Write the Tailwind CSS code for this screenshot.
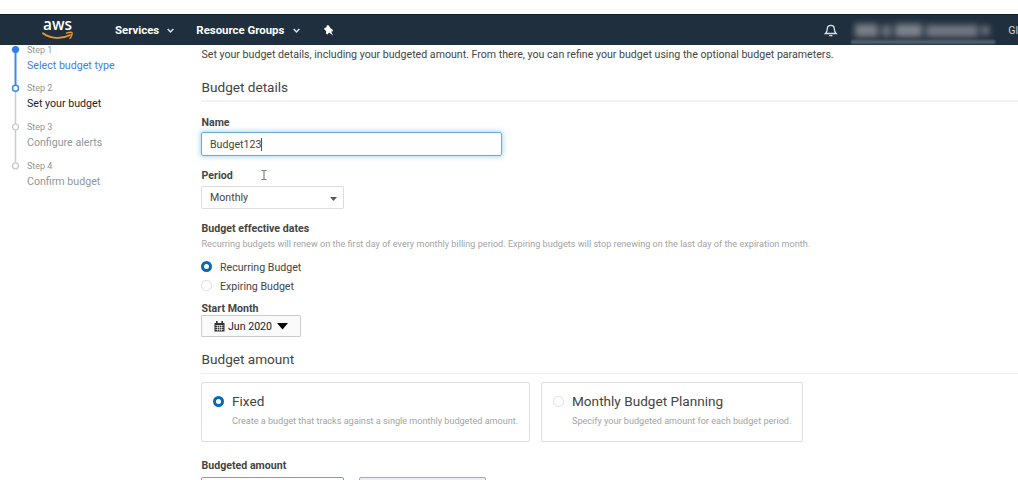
<!DOCTYPE html>
<html lang="en"><head><meta charset="utf-8"><title>Set your budget</title>
<script src="https://cdn.jsdelivr.net/npm/@tailwindcss/browser@4"></script></head>
<body class="w-[1018px] h-[480px] overflow-hidden bg-white font-['Roboto',sans-serif] text-[10.62px] leading-[16px] text-[#444] whitespace-nowrap">
<div class="h-[14px] bg-white"></div>
<header class="h-[31px] bg-[#202f3e] border-t border-[#15202b] flex items-start text-white overflow-hidden">
  <svg class="ml-[42px] mt-[5px] shrink-0 overflow-visible" width="32" height="22" viewBox="0 0 32 22" fill="none">
    <text x="1" y="10" font-family="Open Sans" font-weight="600" font-size="16" textLength="29" lengthAdjust="spacingAndGlyphs" fill="#fff">aws</text>
    <path d="M1 13.2C8 18.6 20 19.4 28 15" stroke="#f0962a" stroke-width="1.8" stroke-linecap="round"/>
    <path d="M24.5 13.2C27 12.2 29.5 12.2 30 12.8S29.5 17 28 18.2" stroke="#f0962a" stroke-width="1.4" stroke-linecap="round"/>
  </svg>
  <span class="ml-[41px] mt-[7px] w-[53px] font-bold text-[11.4px]">Services</span>
  <svg class="mt-[13px] shrink-0" width="7" height="6" fill="none" stroke="#dde2e6" stroke-width="1.5"><path d="M.7 1 3.5 4 6.3 1"/></svg>
  <span class="ml-[22px] mt-[7px] w-[97px] font-bold text-[11.4px]">Resource Groups</span>
  <svg class="ml-[1px] mt-[13px] shrink-0" width="7" height="6" fill="none" stroke="#dde2e6" stroke-width="1.5"><path d="M.7 1 3.5 4 6.3 1"/></svg>
  <svg class="ml-[24px] mt-[10px] shrink-0" width="10" height="11" fill="#fff"><path d="M2.8.2 5 .5 6 2.8 9 5 8.5 6.6 7.2 6.6 9 10.4 5.1 7.5 3.4 9.4 2 8.8 2.2 6.3.2 4.2.6 2.8 2.5 2.6Z"/></svg>
  <svg class="ml-[490px] mt-[8px] shrink-0" width="14" height="15" fill="none" stroke="#dce1e5" stroke-width="1.3"><path d="M1.5 10.5C3.2 9 3.2 7.5 3.4 5 3.8 1.4 9.8 1.4 10.2 5 10.4 7.5 10.4 9 12.1 10.5ZM5.2 12.6H8.4"/></svg>
  <div class="ml-[12px] w-[147px] h-[30px] relative shrink-0 overflow-hidden">
    <div class="absolute left-[5px] top-[9px] flex items-center gap-[4px] blur-[3px]"><i class="w-[23px] h-[13px] bg-[#7b8087]"></i><i class="w-[9px] h-[12px] bg-[#70767e]"></i><i class="w-[27px] h-[13px] bg-[#7f848b]"></i><i class="w-[52px] h-[12px] bg-[#737981]"></i><i class="w-[7px] h-[9px] bg-[#7b8087]"></i></div>
    <div class="absolute left-[1px] top-[25px] w-[144px] h-[4px] bg-[#53606b] blur-[1px]"></div>
  </div>
  <span class="ml-[11px] mt-[8px] text-[#cdd3d8]">Gl</span>
</header>
<div class="flex h-[435px]">
  <aside class="w-[201px] relative shrink-0">
    <svg class="absolute left-0 top-0" width="24" height="130" fill="none">
      <path d="M15.5 4V40" stroke="#3f87e8" stroke-width="2"/><path d="M15.5 46V117" stroke="#ccc" stroke-width="1.5"/>
      <circle cx="15.5" cy="4.5" r="3.6" fill="#2e7de3"/>
      <circle cx="15.5" cy="43.3" r="3" fill="#fff" stroke="#3f87e8" stroke-width="1.5"/>
      <circle cx="15.5" cy="82" r="3" fill="#fff" stroke="#c4c6c8" stroke-width="1.2"/>
      <circle cx="15.5" cy="120.8" r="3" fill="#fff" stroke="#c4c6c8" stroke-width="1.2"/>
    </svg>
    <div class="pl-[27px] flex flex-col text-[#8f9799] text-[10.65px]">
      <div class="h-[37px]"><div class="text-[9px] leading-[10px]">Step 1</div><div class="mt-[3px] text-[#3f80e0]">Select budget type</div></div>
      <div class="h-[39px] pt-[1px]"><div class="text-[9px] leading-[10px]">Step 2</div><div class="mt-[3px] text-[#222]">Set your budget</div></div>
      <div class="h-[39px] pt-[1px]"><div class="text-[9px] leading-[10px]">Step 3</div><div class="mt-[3px]">Configure alerts</div></div>
      <div class="h-[39px] pt-[1px]"><div class="text-[9px] leading-[10px]">Step 4</div><div class="mt-[3px]">Confirm budget</div></div>
    </div>
  </aside>
  <main class="grow flex flex-col [&>*]:shrink-0">
    <p class="mt-[2px] h-[15px] pl-[.5px]">Set your budget details, including your budgeted amount. From there, you can refine your budget using the optional budget parameters.</p>
    <h2 class="mt-[17px] h-[23px] leading-[16px] pl-[.5px] text-[13.6px] border-b-2 border-[#f2f2f2]">Budget details</h2>
    <label class="mt-[13px] h-[14px] pl-[.5px] font-bold">Name</label>
    <div class="mt-[3px] w-[301px] h-[24px] border border-[#6ca9df] rounded-[2px] shadow-[0_0_5px_1px_#a9d8f8] pl-[8px] pt-[2px] flex items-center">Budget123<i class="w-px h-[13px] -mt-[2px] bg-[#555]"></i></div>
    <div class="mt-[12px] h-[14px] pl-[.5px] flex font-bold"><span class="w-[59px]">Period</span>
      <svg class="mt-[1px]" width="6" height="12" fill="none" stroke="#666" stroke-width="1"><path d="M.5 1.5H2.5L3 2 3.5 1.5H5.5M.5 10.5H2.5L3 10 3.5 10.5H5.5M3 2V10"/></svg></div>
    <div class="mt-[4px] w-[143px] h-[23px] border border-[#ddd] rounded-[2px] pl-[8px] pr-[6px] flex items-center justify-between">Monthly<svg class="mt-[2px]" width="7" height="4"><path d="M0 0H7L3.5 4Z" fill="#555"/></svg></div>
    <div class="mt-[12px] h-[14px] pl-[.5px] font-bold">Budget effective dates</div>
    <p class="mt-[3px] h-[12px] pl-[.5px] text-[9.1px] leading-[12px] text-[#a4a4a4]">Recurring budgets will renew on the first day of every monthly billing period. Expiring budgets will stop renewing on the last day of the expiration month.</p>
    <div class="mt-[10px] h-[19px] flex items-start"><i class="mt-px w-[11px] h-[11px] rounded-full border-[3.5px] border-[#0767b8] mr-[8px]"></i>Recurring Budget</div>
    <div class="h-[19px] flex items-start"><i class="mt-px w-[11px] h-[11px] rounded-full border border-[#ddd] mr-[8px]"></i>Expiring Budget</div>
    <div class="mt-[3px] h-[14px] pl-[.5px] font-bold">Start Month</div>
    <button class="w-[100px] h-[22px] border border-[#ccc] bg-[#fafafa] rounded-[1px] pl-[12px] flex items-center text-[#222]">
      <svg width="11" height="11" class="mr-[3px]"><path d="M.5 2H10.5V10.5H.5Z" fill="#333"/><path d="M2.8 0V3M8.2 0V3" stroke="#333" stroke-width="1.6"/><path d="M1.5 4.5H9.5M1.5 6.5H9.5M1.5 8.5H9.5M3.5 4V10M5.5 4V10M7.5 4V10" stroke="#fafafa" stroke-width=".6"/></svg><span class="pt-[2px]">Jun 2020</span><svg class="ml-[5px]" width="11" height="7"><path d="M0 0H11L5.5 6.5Z" fill="#000"/></svg></button>
    <h2 class="mt-[14px] h-[23px] leading-[16px] pl-[.5px] text-[13.6px] border-b border-[#eee]">Budget amount</h2>
    <div class="mt-[8px] flex gap-[11px]">
      <div class="w-[329px] h-[60px] border border-[#ddd] rounded-[2px] pl-[11px] pt-[8px] flex"><i class="mt-[5px] w-[11px] h-[11px] rounded-full border-[3.5px] border-[#0767b8] mr-[8px]"></i><div><div class="text-[13.6px] leading-[20px]">Fixed</div><p class="mt-[4px] text-[9.1px] leading-[12px] text-[#a4a4a4]">Create a budget that tracks against a single monthly budgeted amount.</p></div></div>
      <div class="w-[262px] h-[60px] border border-[#ddd] rounded-[2px] pl-[11px] pt-[8px] flex"><i class="mt-[5px] w-[11px] h-[11px] rounded-full border border-[#ddd] mr-[8px]"></i><div><div class="text-[13.6px] leading-[20px]">Monthly Budget Planning</div><p class="mt-[4px] text-[9.1px] leading-[12px] text-[#a4a4a4]">Specify your budgeted amount for each budget period.</p></div></div>
    </div>
    <div class="mt-[16px] h-[14px] pl-[.5px] font-bold">Budgeted amount</div>
    <div class="mt-[5px] flex gap-[15px]"><div class="w-[143px] h-[24px] border border-[#e8795c] rounded-[2px]"></div><div class="w-[127px] h-[24px] border border-[#a9a0d8] bg-[#eeecfa] rounded-[2px]"></div></div>
  </main>
</div>
</body></html>
